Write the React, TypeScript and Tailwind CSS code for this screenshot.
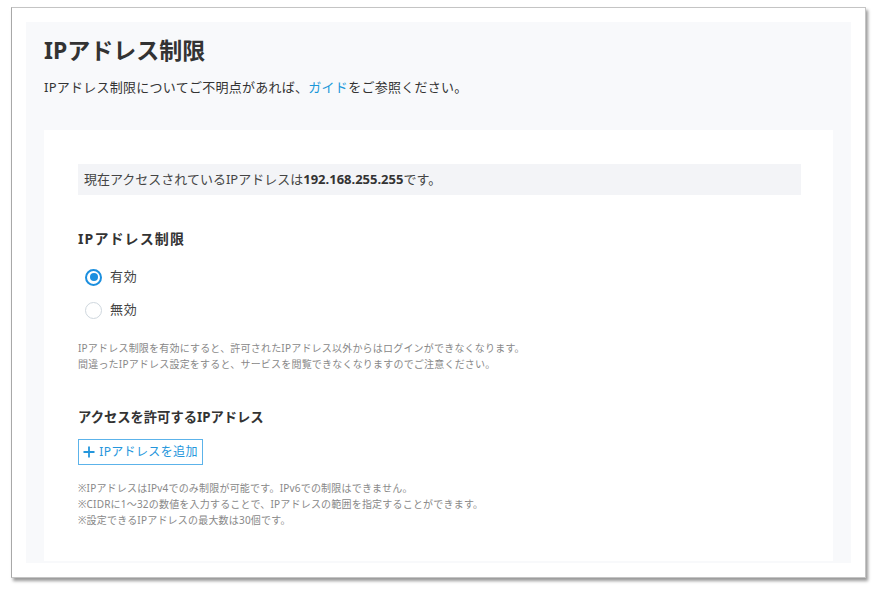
import React from "react";

const font = { fontFamily: '"Noto Sans", "Noto Sans CJK JP", sans-serif' };

function Radio({ checked, label }: { checked: boolean; label: string }) {
  return (
    <label className="flex items-center h-[20px]">
      {checked ? (
        <span className="w-[17px] h-[17px] rounded-full border-2 border-[#1b8fdf] flex items-center justify-center bg-white">
          <span className="w-[8px] h-[8px] rounded-full bg-[#1b8fdf]" />
        </span>
      ) : (
        <span className="w-[17px] h-[17px] rounded-full border border-[#cfd7de] bg-white" />
      )}
      <span className="ml-[8px] text-[13px] text-[#444] tracking-[0.05em]">{label}</span>
    </label>
  );
}

export default function App() {
  return (
    <div className="w-[877px] h-[592px] bg-white pt-[7px] pl-[11px]" style={font}>
      <div className="w-[855px] h-[571px] border border-[#c4c4c4] border-l-[#a8a8a8] bg-white p-[14px] shadow-[2px_3px_3px_rgba(0,0,0,0.4)]">
        <div className="h-full bg-[#f8f9fb] px-[18px] pt-[12px] pb-[2px] flex flex-col">
          <h1 className="text-[23px] font-bold text-[#333] leading-[32px]">IPアドレス制限</h1>
          <p className="mt-[11px] text-[13px] text-[#333] leading-[20px] tracking-[0.02em]">
            IPアドレス制限についてご不明点があれば、<span className="text-[#1a97d9]">ガイド</span>をご参照ください。
          </p>
          <div className="mt-[33px] flex-1 bg-white pl-[34px] pr-[32px] pt-[34px]">
            <div className="h-[31px] bg-[#f3f4f7] flex items-center pl-[6px] text-[13px] text-[#444]">
              現在アクセスされているIPアドレスは<span className="font-bold text-[#333]">192.168.255.255</span>です。
            </div>
            <div className="mt-[34px] text-[14px] font-bold text-[#333] tracking-[0.08em] leading-[20px]">IPアドレス制限</div>
            <div className="mt-[18px] pl-[7px] flex flex-col gap-[13px]">
              <Radio checked label="有効" />
              <Radio checked={false} label="無効" />
            </div>
            <div className="mt-[20px] text-[10px] text-[#888] leading-[16px] tracking-[0.02em]">
              <p>IPアドレス制限を有効にすると、許可されたIPアドレス以外からはログインができなくなります。</p>
              <p>間違ったIPアドレス設定をすると、サービスを閲覧できなくなりますのでご注意ください。</p>
            </div>
            <div className="mt-[35px] text-[13.3px] font-bold text-[#333] leading-[20px]">アクセスを許可するIPアドレス</div>
            <button className="mt-[12px] h-[26px] w-[125px] border border-[#5cb3ea] flex items-center justify-center text-[12px] text-[#2496dc] tracking-[0.03em]">
              <svg width="12" height="12" viewBox="0 0 12 12" className="mr-[4px]">
                <path d="M6 0.5V11.5M0.5 6H11.5" stroke="#2496dc" strokeWidth="1.8" />
              </svg>
              IPアドレスを追加
            </button>
            <div className="mt-[15px] text-[10px] text-[#888] leading-[16px] tracking-[0.02em]">
              <p>※IPアドレスはIPv4でのみ制限が可能です。IPv6での制限はできません。</p>
              <p>※CIDRに1〜32の数値を入力することで、IPアドレスの範囲を指定することができます。</p>
              <p>※設定できるIPアドレスの最大数は30個です。</p>
            </div>
          </div>
        </div>
      </div>
    </div>
  );
}
